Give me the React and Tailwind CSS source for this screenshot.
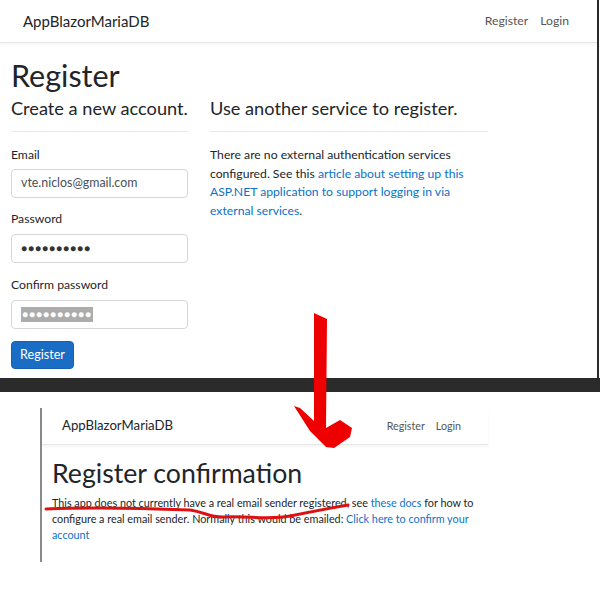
export default function App() {
  return (
    <div className="relative h-[592px] w-[600px] overflow-hidden bg-white font-['Lato',sans-serif] text-[#212529]">
      {/* top screenshot: register form */}
      <section className="h-[378px] w-[599px] border-r-2 border-[#2a2a2a]">
        <nav className="flex h-[43px] items-center justify-between border-b border-[#e6e6e6] pl-[23px] pr-[28px] shadow-[0_2px_3px_rgba(0,0,0,0.04)]">
          <span className="text-[15px]">AppBlazorMariaDB</span>
          <div className="flex gap-[12px] text-[12.2px] text-[#555]">
            <span>Register</span>
            <span>Login</span>
          </div>
        </nav>
        <div className="px-[11px] pt-[12px]">
          <h1 className="text-[30.5px] leading-[40px]">Register</h1>
          <div className="flex gap-[22px]">
            <div className="w-[177px]">
              <h4 className="whitespace-nowrap text-[18.2px] leading-[26px]">Create a new account.</h4>
              <hr className="mt-[10px] border-[#e8e8e8]" />
              <div className="mt-[14px] text-[12.2px]">
                <label className="block leading-[18px]">Email</label>
                <div className="mt-[5px] flex h-[29px] items-center rounded-[4px] border border-[#d6d6d6] px-[9px] text-[12.4px] text-[#495057]">
                  vte.niclos@gmail.com
                </div>
                <label className="mt-[12px] block leading-[18px]">Password</label>
                <div className="mt-[6px] flex h-[29px] items-center rounded-[4px] border border-[#d6d6d6] px-[9px] text-[10px] tracking-[1px] text-[#333]">
                  ●●●●●●●●●●
                </div>
                <label className="mt-[13px] block leading-[18px]">Confirm password</label>
                <div className="mt-[6px] flex h-[29px] items-center rounded-[4px] border border-[#d6d6d6] px-[9px]">
                  <span className="bg-[#acacac] px-[1px] text-[10px] leading-[15px] tracking-[1px] text-white">●●●●●●●●●●</span>
                </div>
                <button className="mt-[12px] h-[28px] w-[63px] rounded-[4px] border border-[#1861ac] bg-[#1a6dc4] text-[12.6px] text-white">
                  Register
                </button>
              </div>
            </div>
            <div className="w-[278px]">
              <h4 className="whitespace-nowrap text-[18.2px] leading-[26px]">Use another service to register.</h4>
              <hr className="mt-[10px] border-[#e8e8e8]" />
              <p className="mt-[14px] w-[260px] text-[12.2px] leading-[18.5px]">
                There are no external authentication services configured. See this{" "}
                <a className="text-[#0a72c9]">article about setting up this ASP.NET application to support logging in via external services</a>.
              </p>
            </div>
          </div>
        </div>
      </section>

      <div className="h-[14px] bg-[#2b2b2b]" />

      {/* bottom screenshot: confirmation */}
      <section className="pl-[40px] pt-[16px]">
        <div className="h-[154px] w-[448px] border-l-2 border-[#8a8a8a]">
          <nav className="flex h-[37px] items-center justify-between border-b border-[#e6e6e6] pl-[20px] pr-[27px] shadow-[0_2px_3px_rgba(0,0,0,0.04)]">
            <span className="text-[13.2px]">AppBlazorMariaDB</span>
            <div className="flex gap-[11px] text-[10.7px] text-[#555]">
              <span>Register</span>
              <span>Login</span>
            </div>
          </nav>
          <div className="pl-[10px] pt-[10px]">
            <h1 className="whitespace-nowrap text-[26.7px] leading-[36px]">Register confirmation</h1>
            <p className="mt-[4px] w-[425px] text-[10.8px] leading-[16px]">
              This app does not currently have a real email sender registered, see{" "}
              <a className="text-[#0a72c9]">these docs</a> for how to configure a real email sender. Normally this would be emailed:{" "}
              <a className="text-[#0a72c9]">Click here to confirm your account</a>
            </p>
          </div>
        </div>
      </section>

      {/* red annotations drawn over the screenshots */}
      <svg className="pointer-events-none absolute left-0 top-0" width="600" height="592" viewBox="0 0 600 592">
        <polygon
          fill="#ee0000"
          points="314,313 327,319 326,428 340,420 352,428 350,437 334,448 326,447 310,431 294,406 300,408 314,421"
        />
        <path
          d="M46 509 C 90 507 140 508 190 510 C 205 512 210 518 225 517 C 250 516 270 520 290 516 C 310 512 330 508 348 505"
          fill="none"
          stroke="#dd1111"
          strokeWidth="3"
          strokeLinecap="round"
        />
      </svg>
    </div>
  );
}
